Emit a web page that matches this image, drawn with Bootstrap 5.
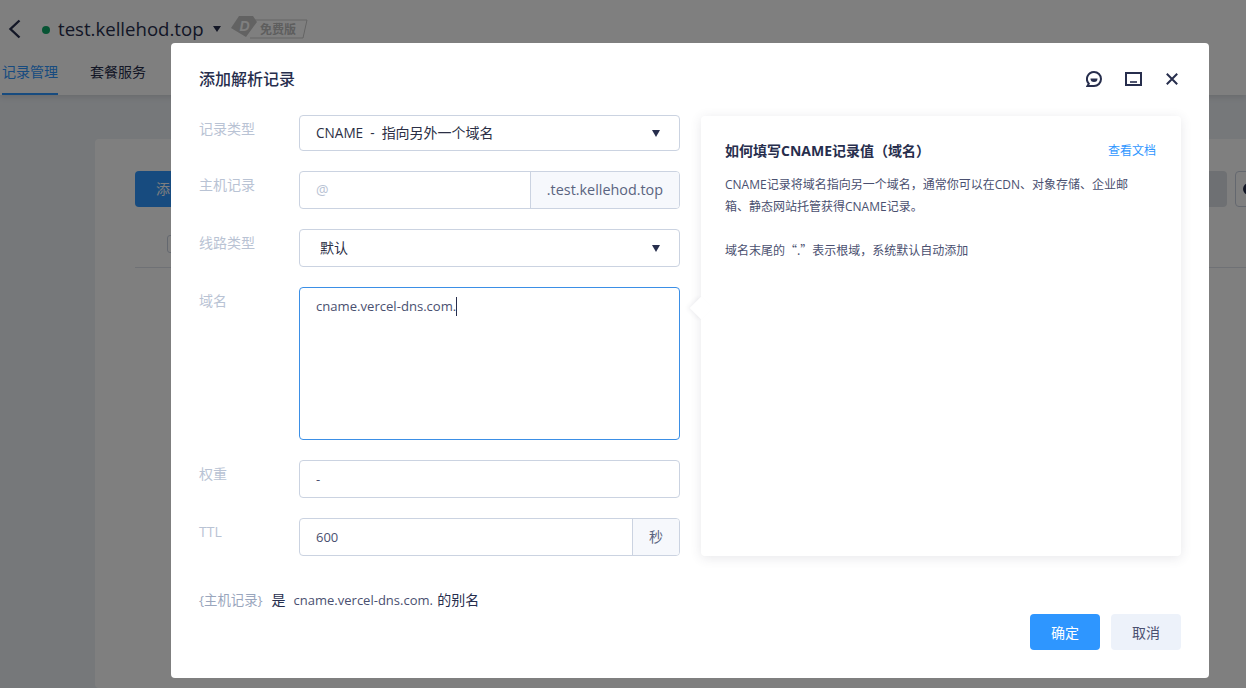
<!DOCTYPE html>
<html lang="zh">
<head>
<meta charset="UTF-8">
<title>添加解析记录</title>
<link href="https://cdn.jsdelivr.net/npm/bootstrap@5.3.0/dist/css/bootstrap.min.css" rel="stylesheet">
<style>
html, body { height: 100%; overflow: hidden; }
body { background: #ecf0f5; color: #272e4d; font-family: "Open Sans", "Noto Sans CJK SC", sans-serif; font-size: 13px; }
.top-head { background: #fff; height: 95px; box-shadow: 0 2px 6px rgba(0,0,0,.12); }
.crumb-row { height: 57px; }
.back-btn { width: 42px; padding-left: 7px; line-height: 0; }
.dom-dot { width: 8px; height: 8px; background: #0fa968; border-radius: 50%; margin-top: 2px; }
.dom-name { font-size: 18.6px; margin: 0 0 0 8px; }
.dom-caret { width: 0; height: 0; border: 4px solid transparent; border-top: 6px solid #272e4d; border-bottom: 0; margin: 1px 10px 0 9px; }
.free-tag { margin-top: -1px; }
.tab-row { gap: 32px; padding-left: 2px; }
.tab-item { font-size: 14px; height: 38px; line-height: 30px; color: #272e4d; }
.tab-item.is-on { color: #2e96ff; border-bottom: 2px solid #2e96ff; }
.back-card { background: #fff; margin: 44px -40px 0 95px; height: 549px; border-radius: 4px; padding: 32px 21px 0 40px; }
.fake-add { width: 90px; height: 36px; background: #2e96ff; color: #fff; border-radius: 4px; line-height: 36px; padding-left: 21px; font-size: 14px; }
.fake-grey { width: 100px; height: 36px; background: #dde1e6; border-radius: 4px; }
.fake-ref { width: 30px; height: 36px; border: 1px solid #c9d0de; border-radius: 4px; padding: 11px 0 0 7px; }
.fake-ref span { display: block; width: 12px; height: 12px; background: #272e4d; border-radius: 50%; }
.fake-check { width: 14px; height: 18px; border: 1px solid #c9d0de; border-radius: 3px; margin: 28px 0 0 32px; }
.back-line { border-top: 1px solid #dfe3ea; margin-top: 14px; }
.veil { position: fixed; inset: 0; background: rgba(0,0,0,.5); }
.dlg { position: fixed; left: 171px; top: 43px; width: 1038px; height: 635px; background: #fff; border-radius: 4px; padding: 0 28px; }
.dlg-head { height: 72px; }
.dlg-title { font-size: 16px; font-weight: 500; margin: 2px 0 0; color: #272e4d; }
.head-tools { gap: 23px; margin-right: 3px; }
.tool-close { margin-left: 1px; }
.dlg-main { gap: 21px; }
.form-side { width: 481px; }
.form-line { margin-bottom: 20px; }
.form-name { width: 100px; color: #b9c3d4; flex: none; padding-top: 3px; font-size: 14px; }
.form-box { width: 381px; border: 1px solid #cbd3e1; border-radius: 4px; height: 38px; }
.line-one { height: 36px; }
.box-text { padding: 0 16px; line-height: 36px; font-size: 13px; color: #4a5070; }
.pick-text { font-size: 14px; color: #2b2f45; line-height: 34px; }
.pick-text b { font-weight: 400; font-size: 13.6px; word-spacing: 3.5px; }
.drop-arrow { width: 0; height: 0; border: 4.5px solid transparent; border-top: 7px solid #272e4d; border-bottom: 0; margin-right: 19px; }
.addon-cell { background: #f6f8fc; border-left: 1px solid #cbd3e1; line-height: 36px; color: #5a6480; font-size: 14px; border-radius: 0 3px 3px 0; }
.addon-cell.host-part { font-size: 14.36px; }
.holder-txt { color: #b9c3d4; font-size: 14px; }
.area-box { height: 153px; border-color: #3b8fe6; color: #4a5070; padding: 9px 16px; line-height: 18px; font-size: 13.1px; }
.caret-bar { display: inline-block; width: 1px; height: 19px; background: #272e4d; vertical-align: -5px; }
.tip-side { position: relative; width: 480px; height: 440px; margin-top: 1px; background: #fff; border-radius: 4px; box-shadow: 0 2px 12px rgba(54,58,80,.12); padding: 26px 25px 24px 24px; }
.tip-side::before { content: ""; position: absolute; left: -8px; top: 184px; width: 16px; height: 16px; background: #fff; transform: rotate(45deg); box-shadow: -2px 2px 4px rgba(54,58,80,.06); }
.tip-title { font-size: 14px; font-weight: 700; margin: 0; color: #272e4d; }
.tip-link { color: #2e96ff; font-size: 12px; text-decoration: none; }
.tip-body { font-size: 12px; line-height: 22px; color: #4a5070; margin: 14px 0 0; width: 420px; }
.cjk-mark { font-family: "Noto Sans CJK SC", sans-serif; line-height: 1; }
.dlg-foot { margin-top: 33px; font-size: 13px; color: #4a5070; }
.foot-key { color: #9aa6bd; margin-right: 9px; font-size: 13.4px; }
.foot-cjk { font-size: 14px; color: #272e4d; }
.foot-name { margin: 0 1px 0 8px; }
.foot-btns { position: absolute; right: 28px; bottom: 28px; gap: 11px; }
.btn-ok, .btn-no { width: 70px; height: 36px; padding: 0; font-size: 14px; border: 0; border-radius: 4px; }
.btn-ok { background: #2e96ff; color: #fff; }
.btn-no { background: #edf2fa; color: #4a5070; }
</style>
</head>
<body>
<div class="top-head">
    <div class="crumb-row d-flex align-items-center">
        <div class="back-btn">
            <svg width="14" height="20" viewBox="0 0 14 20"><path d="M12.5 1.5 3.5 10l9 8.5" fill="none" stroke="#272e4d" stroke-width="2.4"/></svg>
        </div>
        <span class="dom-dot"></span>
        <span class="dom-name">test.kellehod.top</span>
        <span class="dom-caret"></span>
        <svg class="free-tag" width="78" height="26" viewBox="0 0 78 26">
            <path d="M8 1h14l4 6-11 15L0 13z" fill="#c4c4c4"/>
            <text x="8.5" y="16" font-size="14" font-weight="700" font-style="italic" font-family="Liberation Sans, sans-serif" fill="#fff">D</text>
            <path d="M24 5h52l-4 18H19" fill="none" stroke="#c9c9c9"/>
            <text x="29" y="19" font-size="12" font-weight="700" fill="#bdbdbd">免费版</text>
        </svg>
    </div>
    <div class="tab-row d-flex">
        <div class="tab-item is-on">记录管理</div>
        <div class="tab-item">套餐服务</div>
    </div>
</div>
<div class="back-card">
    <div class="d-flex justify-content-between">
        <div class="fake-add">添</div>
        <div class="d-flex gap-2"><div class="fake-grey"></div><div class="fake-ref"><span></span></div></div>
    </div>
    <div class="fake-check"></div>
    <div class="back-line"></div>
</div>
<div class="veil"></div>

<div class="dlg">
    <div class="dlg-head d-flex align-items-center justify-content-between">
        <h5 class="dlg-title">添加解析记录</h5>
        <div class="head-tools d-flex align-items-center">
            <svg width="16" height="16" viewBox="0 0 16 16"><path d="M8 1a7 7 0 0 1 0 14H1.5l1.3-2.3A7 7 0 0 1 8 1z" fill="none" stroke="#272e4d" stroke-width="2"/><path d="M4.5 7.5h7a3.5 3.5 0 0 1-7 0z" fill="#272e4d"/></svg>
            <svg width="17" height="14" viewBox="0 0 17 14"><rect x="1" y="1" width="15" height="12" fill="none" stroke="#272e4d" stroke-width="2"/><path d="M5 10h7" stroke="#272e4d" stroke-width="1.6"/></svg>
            <svg class="tool-close" width="12" height="12" viewBox="0 0 12 12"><path d="M.8.8l10.4 10.4m0-10.4L.8 11.2" stroke="#272e4d" stroke-width="2"/></svg>
        </div>
    </div>
    <div class="dlg-main d-flex">
        <div class="form-side">
            <div class="form-line d-flex">
                <div class="form-name">记录类型</div>
                <div class="form-box line-one d-flex align-items-center justify-content-between">
                    <span class="box-text pick-text"><b>CNAME - </b>指向另外一个域名</span><span class="drop-arrow"></span>
                </div>
            </div>
            <div class="form-line d-flex">
                <div class="form-name">主机记录</div>
                <div class="form-box d-flex">
                    <span class="box-text holder-txt flex-grow-1">@</span>
                    <span class="addon-cell host-part px-3">.test.kellehod.top</span>
                </div>
            </div>
            <div class="form-line d-flex">
                <div class="form-name">线路类型</div>
                <div class="form-box d-flex align-items-center justify-content-between">
                    <span class="box-text pick-text px-3 ms-1">默认</span><span class="drop-arrow"></span>
                </div>
            </div>
            <div class="form-line d-flex">
                <div class="form-name">域名</div>
                <div class="form-box area-box">cname.vercel-dns.com.<span class="caret-bar"></span></div>
            </div>
            <div class="form-line d-flex">
                <div class="form-name">权重</div>
                <div class="form-box"><span class="box-text d-block">-</span></div>
            </div>
            <div class="form-line d-flex mb-0">
                <div class="form-name">TTL</div>
                <div class="form-box d-flex">
                    <span class="box-text flex-grow-1">600</span>
                    <span class="addon-cell px-3">秒</span>
                </div>
            </div>
        </div>
        <div class="tip-side">
            <div class="d-flex align-items-center justify-content-between">
                <h6 class="tip-title">如何填写CNAME记录值（域名）</h6>
                <a class="tip-link" href="#">查看文档</a>
            </div>
            <p class="tip-body">CNAME记录将域名指向另一个域名，通常你可以在CDN、对象存储、企业邮箱、静态网站托管获得CNAME记录。<br><br>域名末尾的<span class="cjk-mark">“.”</span>表示根域，系统默认自动添加</p>
        </div>
    </div>
    <div class="dlg-foot"><span class="foot-key">{主机记录}</span><span class="foot-cjk">是</span><span class="foot-name">cname.vercel-dns.com.</span> <span class="foot-cjk">的别名</span></div>
    <div class="foot-btns d-flex">
        <button class="btn btn-ok" type="button">确定</button>
        <button class="btn btn-no" type="button">取消</button>
    </div>
</div>
<script src="https://cdn.jsdelivr.net/npm/bootstrap@5.3.0/dist/js/bootstrap.bundle.min.js"></script>
</body>
</html>
